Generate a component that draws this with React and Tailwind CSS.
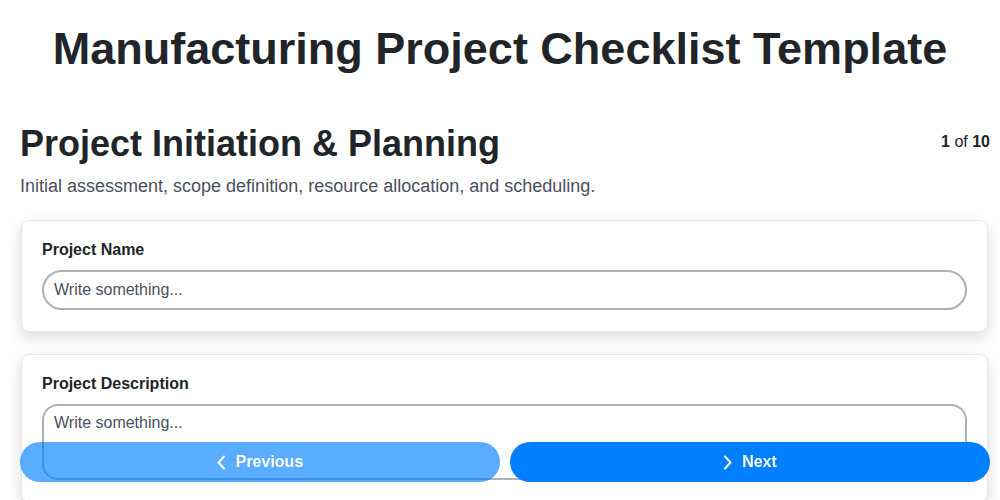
const fields = [
  { id: "name", label: "Project Name", type: "input" },
  { id: "description", label: "Project Description", type: "textarea" },
];

const Chevron = ({ dir }) => (
  <svg width="9" height="15" viewBox="0 0 9 15" fill="none" stroke="currentColor" strokeWidth="2" strokeLinecap="round" strokeLinejoin="round">
    {dir === "left" ? <path d="M7 1.5 1.5 7.5 7 13.5" /> : <path d="M2 1.5 7.5 7.5 2 13.5" />}
  </svg>
);

const Field = ({ field }) => (
  <div className="bg-white rounded-lg border border-gray-200 shadow-[0_6px_16px_rgba(0,0,0,0.14)] px-5 pt-[19px] pb-[21px] mb-[22px]">
    <label className="block text-base leading-5 font-bold text-[#212529] mb-[10px]">{field.label}</label>
    {field.type === "input" ? (
      <input
        placeholder="Write something..."
        className="w-full h-10 px-2.5 rounded-full border-2 border-[#aab2bb] text-base text-[#212529] placeholder:text-[#4a5060] outline-none"
      />
    ) : (
      <textarea
        placeholder="Write something..."
        rows={3}
        className="w-full h-[76px] px-2.5 py-[5px] rounded-2xl border-2 border-[#aab2bb] text-base text-[#212529] placeholder:text-[#4a5060] outline-none resize-none block"
      />
    )}
  </div>
);

const App = () => {
  return (
    <div className="min-h-screen bg-white font-['Liberation_Sans',Arial,sans-serif] pb-24">
      <h1 className="pt-[22px] text-[45px] leading-[54px] font-bold text-center text-[#212529]">
        Manufacturing Project Checklist Template
      </h1>

      <div className="pl-5 pr-[10px]">
        <div className="mt-12 flex justify-between items-start">
          <h2 className="text-4xl leading-10 font-bold text-[#212529]">Project Initiation &amp; Planning</h2>
          <div className="mt-1.5 text-base leading-6 text-[#212529]">
            <span className="font-bold">1</span> of <span className="font-bold">10</span>
          </div>
        </div>
        <p className="mt-2 text-lg leading-7 text-[#4a5060]">
          Initial assessment, scope definition, resource allocation, and scheduling.
        </p>

        <div className="mt-5 ml-px mr-[2px]">
          {fields.map(f => <Field key={f.id} field={f} />)}
        </div>
      </div>

      <div className="fixed bottom-[18px] left-5 right-[10px] flex gap-[10px]">
        <button className="flex-1 h-10 rounded-full bg-[#0080ff]/65 text-white font-bold text-base flex items-center justify-center gap-2.5">
          <Chevron dir="left" /> Previous
        </button>
        <button className="flex-1 h-10 rounded-full bg-[#0080ff] text-white font-bold text-base flex items-center justify-center gap-2.5">
          <Chevron dir="right" /> Next
        </button>
      </div>
    </div>
  );
};

export default App;
